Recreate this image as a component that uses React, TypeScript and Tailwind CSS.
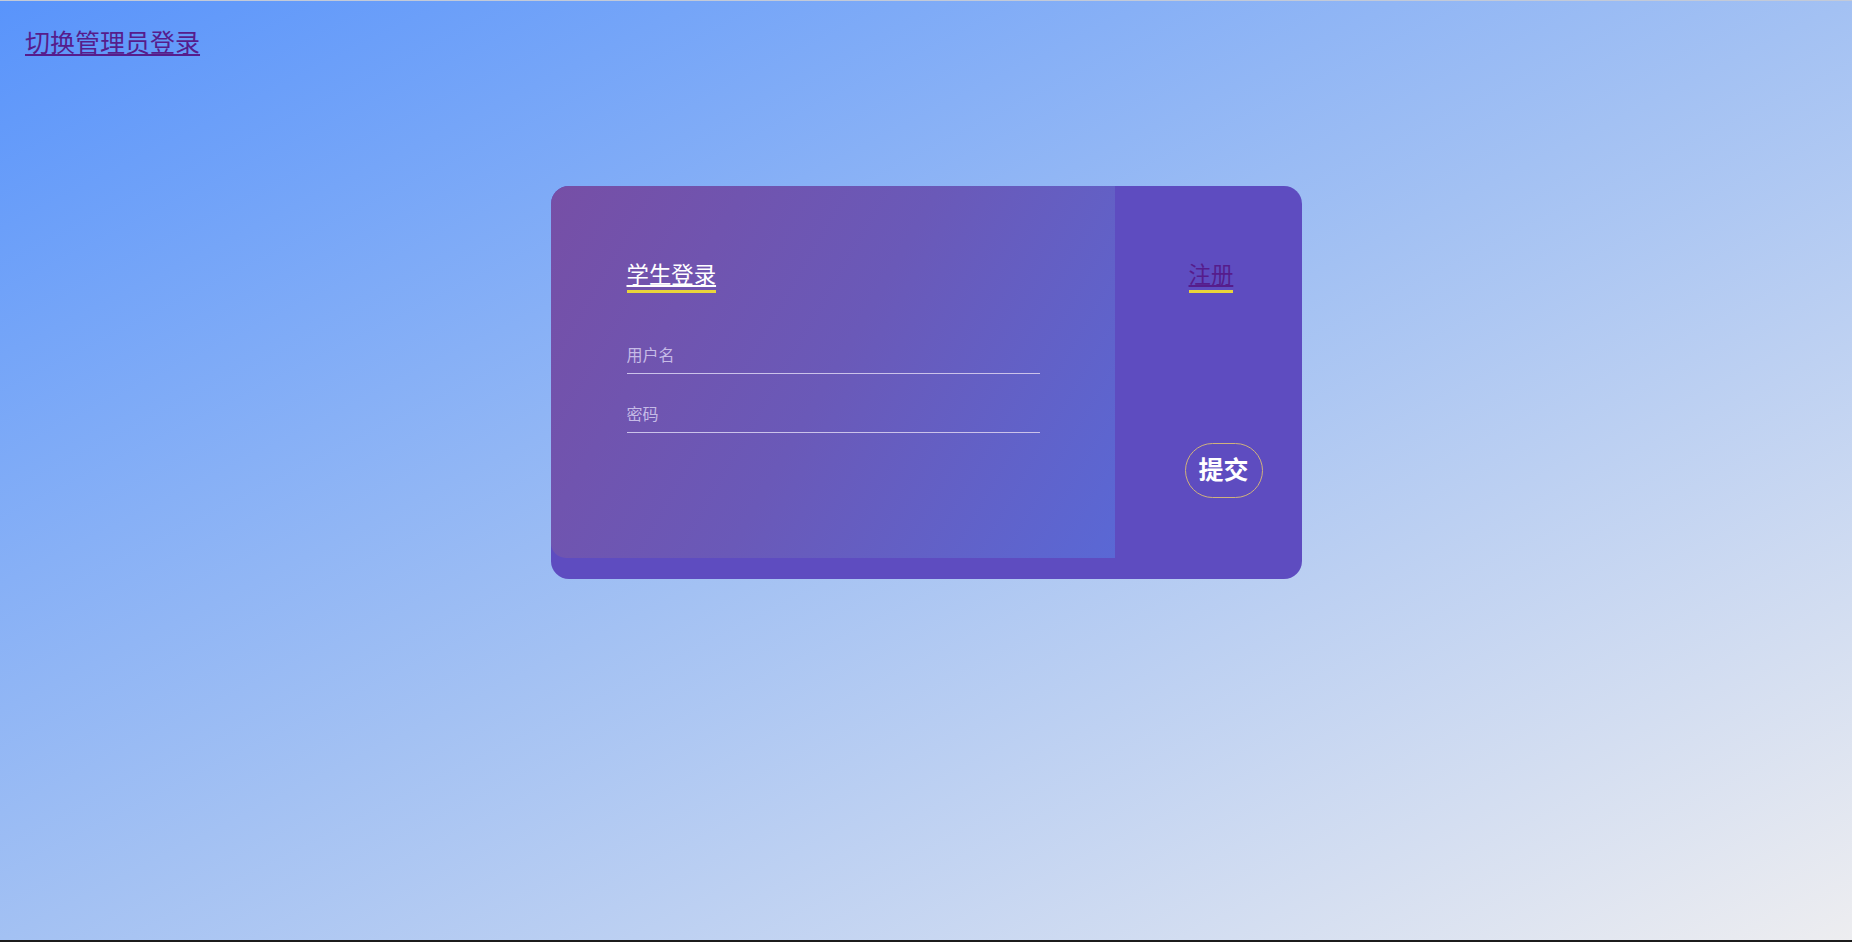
import React from "react";

export default function App() {
  const cjk = { fontFamily: '"Noto Sans CJK SC", "Noto Sans", sans-serif' };
  return (
    <div
      style={cjk}
      className="box-border h-screen w-full overflow-hidden border-t border-t-[#c3cad8] border-b-2 border-b-[#1c1c1c] bg-[linear-gradient(to_bottom_right,#5994fb_0%,#a3c1f3_50%,#ededf0_100%)]"
    >
      <div className="pl-[25px] pt-[25px]">
        <a href="#" className="text-[25px] leading-[30px] text-[#561c8c] underline">
          切换管理员登录
        </a>
      </div>

      <div className="mx-auto mt-[129px] flex h-[393px] w-[751px] rounded-[18px] bg-[#5e4cc0]">
        <div className="flex h-[372px] w-[564px] flex-col items-start rounded-tl-[18px] rounded-bl-[15px] bg-[linear-gradient(120deg,#764fa6_0%,#6a59b8_50%,#5a68d5_100%)] pl-[76px] pt-[70px]">
          <a
            href="#"
            className="border-b-[3px] border-b-[#e9d43a] text-[22.4px] leading-[34px] text-white underline"
          >
            学生登录
          </a>
          <input
            type="text"
            placeholder="用户名"
            className="mt-[45px] h-[36px] w-[413px] border-b border-b-[#cbc2ea] bg-transparent pb-[3px] text-[16px] text-white outline-none placeholder:text-[#c6bbe6]"
            style={cjk}
          />
          <input
            type="password"
            placeholder="密码"
            className="mt-[23px] h-[36px] w-[413px] border-b border-b-[#cbc2ea] bg-transparent pb-[3px] text-[16px] text-white outline-none placeholder:text-[#c6bbe6]"
            style={cjk}
          />
        </div>
        <div className="flex flex-1 flex-col items-start pl-[74px] pt-[70px]">
          <a
            href="#"
            className="border-b-[3px] border-b-[#e9d43a] text-[22.4px] leading-[34px] text-[#561c8c] underline"
          >
            注册
          </a>
          <button
            style={cjk}
            className="ml-[-4px] mt-[150px] rounded-full border border-[#d0b27c] px-[13px] pt-[8px] pb-[12px] text-[25px] font-bold leading-[33px] text-white"
          >
            提交
          </button>
        </div>
      </div>
    </div>
  );
}
